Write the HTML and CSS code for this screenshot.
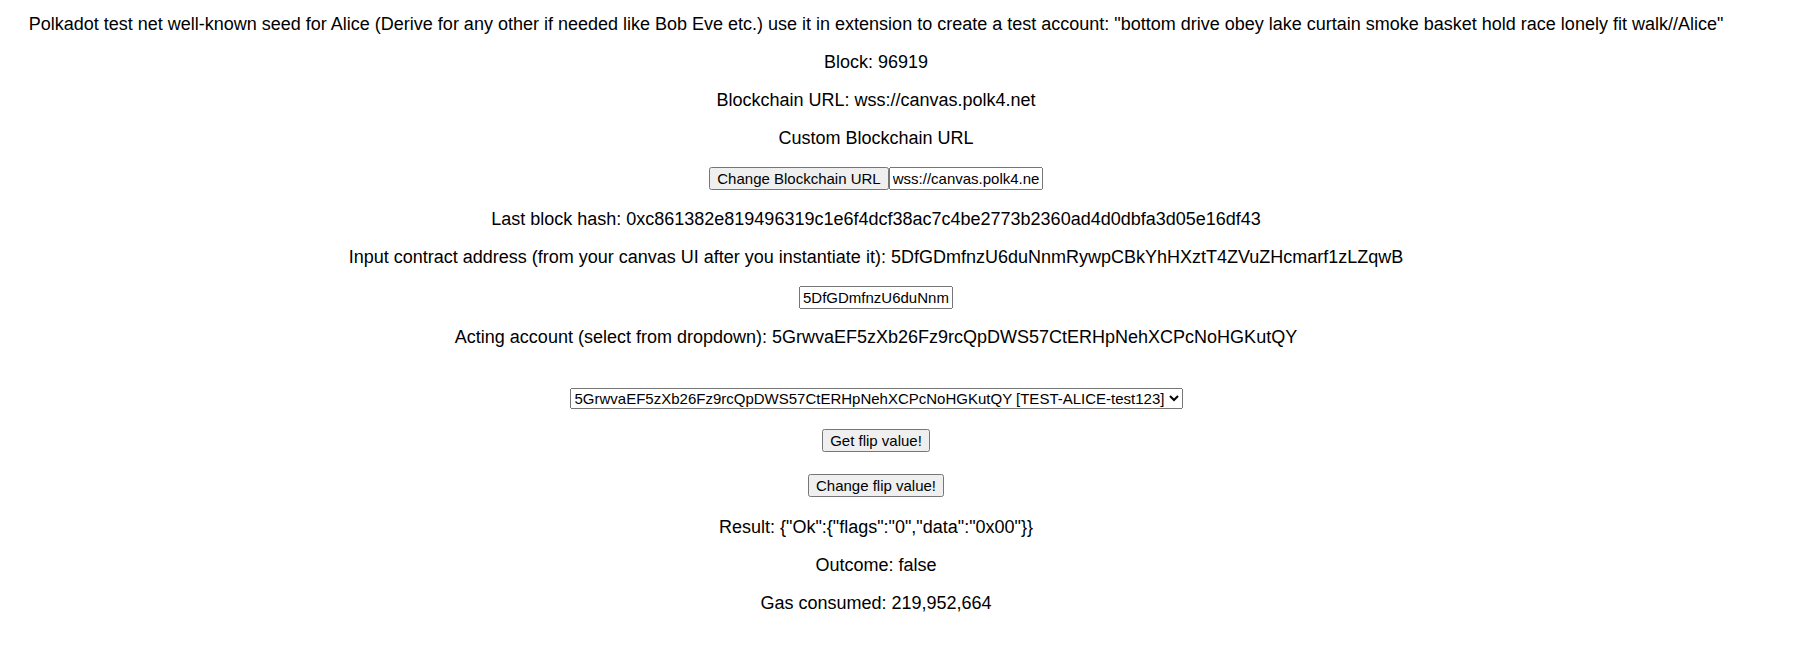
FILE: index.html
```html
<!DOCTYPE html>
<html lang="en">
<head>
<meta charset="utf-8">
<title>Flipper</title>
<link rel="stylesheet" href="styles.css">
</head>
<body>
<div class="app">
  <p class="line">Polkadot test net well-known seed for Alice (Derive for any other if needed like Bob Eve etc.) use it in extension to create a test account: "bottom drive obey lake curtain smoke basket hold race lonely fit walk//Alice"</p>
  <p class="line">Block: 96919</p>
  <p class="line">Blockchain URL: wss://canvas.polk4.net</p>
  <p class="line">Custom Blockchain URL</p>
  <div class="row row-url">
    <button class="btn btn-url" type="button">Change Blockchain URL</button><input class="field" type="text" value="wss://canvas.polk4.net">
  </div>
  <p class="line">Last block hash: 0xc861382e819496319c1e6f4dcf38ac7c4be2773b2360ad4d0dbfa3d05e16df43</p>
  <p class="line">Input contract address (from your canvas UI after you instantiate it): 5DfGDmfnzU6duNnmRywpCBkYhHXztT4ZVuZHcmarf1zLZqwB</p>
  <div class="row row-input">
    <input class="field" type="text" value="5DfGDmfnzU6duNnmRywpCBkYhHXztT4ZVuZHcmarf1zLZqwB">
  </div>
  <p class="line">Acting account (select from dropdown): 5GrwvaEF5zXb26Fz9rcQpDWS57CtERHpNehXCPcNoHGKutQY</p>
  <div class="row row-select">
    <select class="picker">
      <option>5GrwvaEF5zXb26Fz9rcQpDWS57CtERHpNehXCPcNoHGKutQY [TEST-ALICE-test123]</option>
    </select>
  </div>
  <div class="row row-btn">
    <button class="btn" type="button">Get flip value!</button>
  </div>
  <div class="row row-btn">
    <button class="btn" type="button">Change flip value!</button>
  </div>
  <p class="line">Result: {"Ok":{"flags":"0","data":"0x00"}}</p>
  <p class="line">Outcome: false</p>
  <p class="line">Gas consumed: 219,952,664</p>
</div>
</body>
</html>
```

FILE: styles.css
```css
html, body {
  margin: 0;
  padding: 0;
  background: #ffffff;
}

body {
  font-family: "Liberation Sans", Arial, Helvetica, sans-serif;
  color: #000000;
}

.app {
  display: flex;
  flex-direction: column;
  align-items: center;
  gap: 18px;
  padding: 14px 42px 0 0;
  text-align: center;
}

.line {
  margin: 0;
  font-size: 18px;
  line-height: 20px;
  white-space: nowrap;
}

.row {
  display: flex;
  align-items: center;
  justify-content: center;
}

.row-url {
  height: 25px;
}

.row-input {
  height: 24px;
}

.row-select {
  height: 22px;
  margin-top: 22px;
}

.row-btn {
  height: 27px;
}

.btn,
.field,
.picker {
  font-family: "Liberation Sans", Arial, Helvetica, sans-serif;
  font-size: 15px;
  margin: 0;
}

.btn {
  padding: 1px 6px;
}

.field {
  width: 154px;
  box-sizing: border-box;
  padding: 1px 2px;
}
```
